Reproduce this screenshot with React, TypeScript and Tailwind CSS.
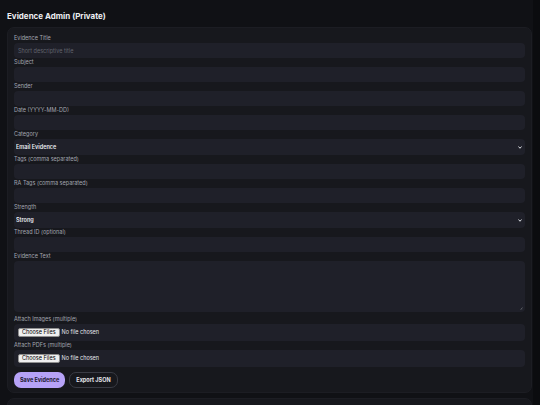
import type { ReactNode } from "react"

const inputCls =
    "block w-full h-[15px] rounded-[4px] bg-[#1f2029] px-[4px] text-[5.5px] text-[#e5e7eb] placeholder:text-[#62646e] outline-none"

function Field({ label, children }: { label: string; children: ReactNode }) {
    return (
        <div>
            <label className="block text-[5.5px] leading-[8px] text-[#a3a6b0] mb-[1px]">{label}</label>
            {children}
        </div>
    )
}

function Select({ value, options }: { value: string; options: string[] }) {
    return (
        <div className="relative">
            <select
                defaultValue={value}
                className="block w-full h-[16px] appearance-none rounded-[4px] bg-[#1f2029] pl-[2px] text-[5.5px] font-semibold text-[#eceef2] outline-none"
            >
                {options.map((o) => (
                    <option key={o}>{o}</option>
                ))}
            </select>
            <svg
                className="pointer-events-none absolute right-[3px] top-[7px] h-[3px] w-[4px]"
                viewBox="0 0 8 6"
                fill="none"
                stroke="#d8dae0"
                strokeWidth="2"
            >
                <path d="M1 1l3 3.5 3-3.5" />
            </svg>
        </div>
    )
}

function FilePicker() {
    return (
        <div className="flex h-[17px] items-center rounded-[4px] bg-[#1f2029] pl-[4px]">
            <span className="rounded-[2px] border border-[#8f8f8f] bg-[#efefef] px-[3px] text-[5.5px] leading-[7px] text-black">
                Choose Files
            </span>
            <span className="ml-[2px] text-[5.5px] text-[#e5e7eb]">No file chosen</span>
        </div>
    )
}

export default function App() {
    return (
        <div className="flex h-[405px] w-[540px] overflow-hidden bg-[#101115] font-['Inter','Noto_Sans',sans-serif]">
            <main className="flex-1 pl-[7px] pr-[1px] pt-[11px]">
                <h1 className="text-[8px] font-bold leading-[11px] text-[#eceef2]">Evidence Admin (Private)</h1>

                <div className="mt-[5px] rounded-[7px] border border-[#1c1d23] bg-[#17181d] px-[6px] pt-[6px] pb-[4px]">
                    <Field label="Evidence Title">
                        <input className={inputCls} placeholder="Short descriptive title" />
                    </Field>
                    <Field label="Subject">
                        <input className={inputCls} />
                    </Field>
                    <Field label="Sender">
                        <input className={inputCls} />
                    </Field>
                    <Field label="Date (YYYY-MM-DD)">
                        <input className={inputCls} />
                    </Field>
                    <Field label="Category">
                        <Select value="Email Evidence" options={["Email Evidence", "Document", "Screenshot"]} />
                    </Field>
                    <Field label="Tags (comma separated)">
                        <input className={inputCls} />
                    </Field>
                    <Field label="RA Tags (comma separated)">
                        <input className={inputCls} />
                    </Field>
                    <Field label="Strength">
                        <Select value="Strong" options={["Strong", "Medium", "Weak"]} />
                    </Field>
                    <Field label="Thread ID (optional)">
                        <input className={inputCls} />
                    </Field>
                    <Field label="Evidence Text">
                        <div className="relative">
                            <textarea className="block h-[51px] w-full resize-none rounded-[4px] bg-[#1f2029] px-[4px] py-[3px] text-[5.5px] text-[#e5e7eb] outline-none" />
                            {/* tiny resize grip */}
                            <svg className="pointer-events-none absolute bottom-[2px] right-[2px] h-[3px] w-[3px]" viewBox="0 0 6 6" stroke="#8a8c95" strokeWidth="1">
                                <path d="M1 5L5 1M3.5 5L5 3.5" />
                            </svg>
                        </div>
                    </Field>
                    <div className="mt-[3px]">
                        <Field label="Attach Images (multiple)">
                            <FilePicker />
                        </Field>
                    </div>
                    <Field label="Attach PDFs (multiple)">
                        <FilePicker />
                    </Field>

                    <div className="mt-[5px] flex gap-[4px]">
                        <button className="h-[16px] rounded-[7px] bg-[#b6a2f7] px-[6px] text-[5.5px] font-bold text-[#1b1730]">
                            Save Evidence
                        </button>
                        <button className="h-[16px] rounded-[7px] border border-[#393b44] px-[6px] text-[5.5px] font-bold text-[#e5e7eb]">
                            Export JSON
                        </button>
                    </div>
                </div>

                <div className="mt-[5px] h-[20px] rounded-t-[7px] border border-[#1c1d23] bg-[#17181d]" />
            </main>
            <div className="w-[7px] bg-[#0b0c0f]" />
        </div>
    )
}
